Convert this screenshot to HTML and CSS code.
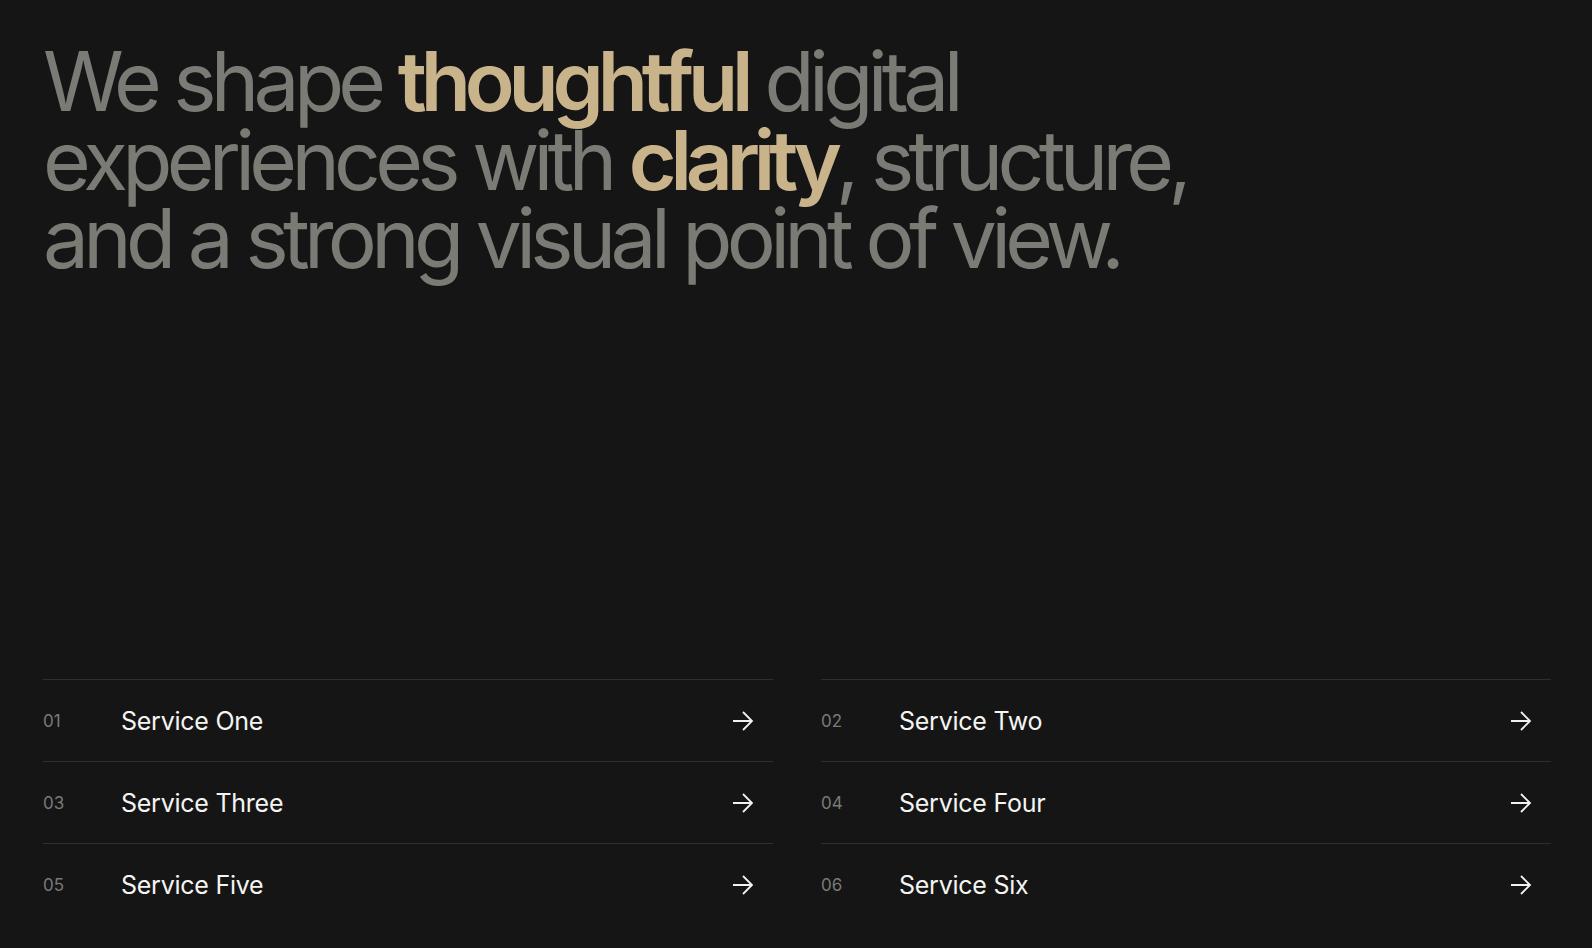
FILE: index.html
```html
<!DOCTYPE html>
<html lang="en">
<head>
  <meta charset="UTF-8" />
  <meta name="viewport" content="width=device-width, initial-scale=1.0"/>
  <title>Services</title>
  <link rel="stylesheet" href="styles.css">
</head>
<body>

  <main class="page">
    <h1 class="intro">
      <span class="line">We shape <strong>thoughtful</strong> digital</span>
      <span class="line">experiences with <strong>clarity</strong>, structure,</span>
      <span class="line">and a strong visual point of view.</span>
    </h1>

    <!-- service list, two columns -->
    <ul class="services">
      <li class="service">
        <span class="num">01</span>
        <span class="title">Service One</span>
        <svg class="arrow" viewBox="0 0 22 22"><path d="M1 11h19M11 2l9 9-9 9"/></svg>
      </li>
      <li class="service">
        <span class="num">02</span>
        <span class="title">Service Two</span>
        <svg class="arrow" viewBox="0 0 22 22"><path d="M1 11h19M11 2l9 9-9 9"/></svg>
      </li>
      <li class="service">
        <span class="num">03</span>
        <span class="title">Service Three</span>
        <svg class="arrow" viewBox="0 0 22 22"><path d="M1 11h19M11 2l9 9-9 9"/></svg>
      </li>
      <li class="service">
        <span class="num">04</span>
        <span class="title">Service Four</span>
        <svg class="arrow" viewBox="0 0 22 22"><path d="M1 11h19M11 2l9 9-9 9"/></svg>
      </li>
      <li class="service">
        <span class="num">05</span>
        <span class="title">Service Five</span>
        <svg class="arrow" viewBox="0 0 22 22"><path d="M1 11h19M11 2l9 9-9 9"/></svg>
      </li>
      <li class="service">
        <span class="num">06</span>
        <span class="title">Service Six</span>
        <svg class="arrow" viewBox="0 0 22 22"><path d="M1 11h19M11 2l9 9-9 9"/></svg>
      </li>
    </ul>
  </main>

</body>
</html>
```

FILE: styles.css
```css
* {
  margin: 0;
  padding: 0;
  box-sizing: border-box;
}

body {
  background-color: #151515;
  color: #f2f2f0;
  font-family: Inter, 'Noto Sans', sans-serif;
}

.page {
  min-height: 100vh;
  display: flex;
  flex-direction: column;
  justify-content: space-between;
  padding: 43px 41px 23px 43px;
}

.intro {
  display: flex;
  flex-direction: column;
  font-size: 82px;
  font-weight: 400;
  letter-spacing: -0.07em;
  color: #7b7b75;
}

.intro .line {
  display: block;
  height: 78.5px;
  line-height: 78.5px;
}

.intro strong {
  font-weight: 600;
  letter-spacing: -0.075em;
  color: #c9b38b;
}

.services {
  list-style: none;
  display: grid;
  grid-template-columns: 1fr 1fr;
  column-gap: 48px;
}

.service {
  display: flex;
  align-items: center;
  height: 82px;
  border-top: 1px solid #2e2e2e;
  padding-right: 19px;
}

.num {
  width: 78px;
  font-size: 17px;
  color: #7a7a77;
}

.title {
  flex: 1;
  font-size: 25px;
  letter-spacing: -0.01em;
  color: #f4f4f2;
}

.arrow {
  width: 22px;
  height: 22px;
  fill: none;
  stroke: #f2f2f0;
  stroke-width: 1.8;
}
```
